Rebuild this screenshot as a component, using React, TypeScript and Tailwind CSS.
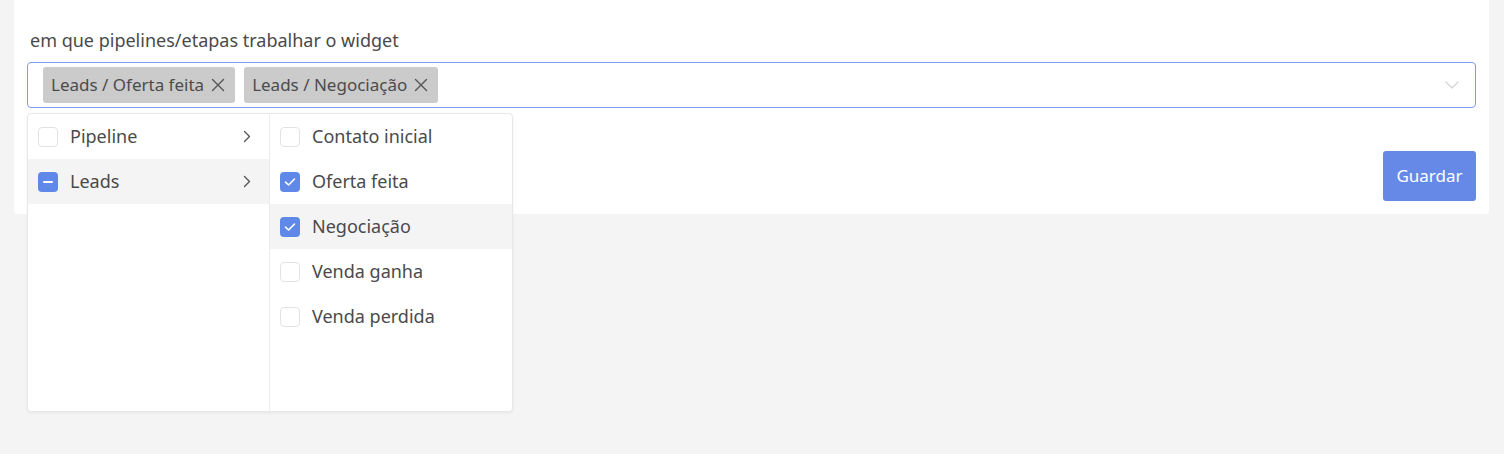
import React from "react";

const font = { fontFamily: '"Noto Sans", "Open Sans", sans-serif' };

function Box({ state }: { state: "none" | "checked" | "partial" }) {
  if (state === "none")
    return <span className="w-5 h-5 rounded-[4px] border border-[#e3e3e3] bg-white shrink-0" />;
  return (
    <span className="w-5 h-5 rounded-[4px] bg-[#6088e8] shrink-0 flex items-center justify-center">
      {state === "checked" ? (
        <svg width="12" height="10" viewBox="0 0 12 10" fill="none">
          <path d="M1.5 5.2 L4.6 8 L10.5 2" stroke="white" strokeWidth="1.6" strokeLinecap="round" strokeLinejoin="round" />
        </svg>
      ) : (
        <span className="w-[10px] h-[2px] bg-white rounded" />
      )}
    </span>
  );
}

function Chevron() {
  return (
    <svg width="8" height="13" viewBox="0 0 8 13" fill="none">
      <path d="M1.5 1.5 L6.5 6.5 L1.5 11.5" stroke="#555" strokeWidth="1.4" strokeLinecap="round" strokeLinejoin="round" />
    </svg>
  );
}

function Tag({ text }: { text: string }) {
  return (
    <span className="h-9 flex items-center gap-[7px] bg-[#cbcbcb] rounded-[3px] pl-2 pr-[10px] text-[17px] text-[#4b4b4b]">
      {text}
      <svg width="14" height="14" viewBox="0 0 14 14" fill="none">
        <path d="M1.5 1.5 L12.5 12.5 M12.5 1.5 L1.5 12.5" stroke="#555" strokeWidth="1.4" strokeLinecap="round" />
      </svg>
    </span>
  );
}

export default function App() {
  const left = [
    { label: "Pipeline", state: "none" as const, active: false },
    { label: "Leads", state: "partial" as const, active: true },
  ];
  const right = [
    { label: "Contato inicial", state: "none" as const, active: false },
    { label: "Oferta feita", state: "checked" as const, active: false },
    { label: "Negociação", state: "checked" as const, active: true },
    { label: "Venda ganha", state: "none" as const, active: false },
    { label: "Venda perdida", state: "none" as const, active: false },
  ];
  return (
    <div className="min-h-screen w-full bg-[#f4f4f4] px-[14px]" style={font}>
      <div className="bg-white rounded-b-[4px] w-[1475px] px-[13px] pt-[28px] pb-[13px]">
        <div className="text-[18px] leading-6 text-[#4a4a4a] pl-[3px]">em que pipelines/etapas trabalhar o widget</div>
        <div className="relative mt-[10px]">
          <div className="h-[46px] border border-[#7c9cf0] rounded-[4px] flex items-center pl-[15px] pr-4 gap-[9px]">
            <Tag text="Leads / Oferta feita" />
            <Tag text="Leads / Negociação" />
            <div className="flex-1" />
            <svg width="14" height="8" viewBox="0 0 14 8" fill="none">
              <path d="M1 1 L7 7 L13 1" stroke="#d4d4d4" strokeWidth="1.3" strokeLinecap="round" strokeLinejoin="round" />
            </svg>
          </div>
          <div className="absolute left-0 top-[51px] w-[486px] h-[299px] bg-white border border-[#e8e8e8] rounded-[4px] shadow-[0_1px_3px_rgba(0,0,0,0.06)] flex z-10">
            <div className="w-[242px] border-r border-[#ececec]">
              {left.map((r) => (
                <div key={r.label} className={`h-[45px] flex items-center pl-[10px] pr-[18px] gap-3 ${r.active ? "bg-[#f4f4f4]" : ""}`}>
                  <Box state={r.state} />
                  <span className="flex-1 text-[18px] text-[#4a4a4a]">{r.label}</span>
                  <Chevron />
                </div>
              ))}
            </div>
            <div className="flex-1">
              {right.map((r) => (
                <div key={r.label} className={`h-[45px] flex items-center pl-[10px] gap-3 ${r.active ? "bg-[#f4f4f4]" : ""}`}>
                  <Box state={r.state} />
                  <span className="text-[18px] text-[#4a4a4a]">{r.label}</span>
                </div>
              ))}
            </div>
          </div>
        </div>
        <div className="flex justify-end mt-[43px]">
          <button className="w-[93px] h-[50px] rounded-[3px] bg-[#6689e8] text-white text-[17px]">Guardar</button>
        </div>
      </div>
    </div>
  );
}
